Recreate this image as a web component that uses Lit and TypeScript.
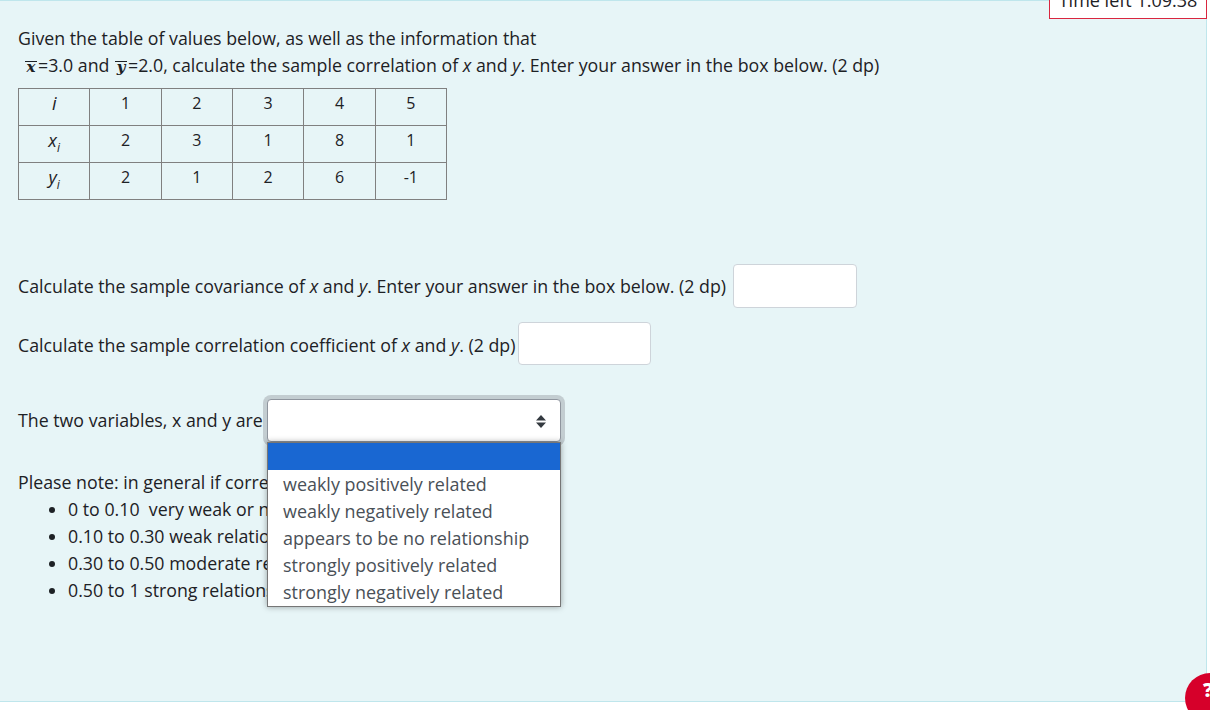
import { LitElement, html, css } from "lit";
import { customElement } from "lit/decorators.js";

const rows = [
  ["i", "1", "2", "3", "4", "5"],
  ["x", "2", "3", "1", "8", "1"],
  ["y", "2", "1", "2", "6", "-1"],
];
const options = [
  "weakly positively related",
  "weakly negatively related",
  "appears to be no relationship",
  "strongly positively related",
  "strongly negatively related",
];
const notes = [
  "0 to 0.10\u00a0 very weak or no relationship",
  "0.10 to 0.30 weak relationship",
  "0.30 to 0.50 moderate relationship",
  "0.50 to 1 strong relationship",
];

@customElement("app-root")
export class AppRoot extends LitElement {
  static styles = css`
    :host {
      display: block;
      height: 710px;
      background: #fff;
      font-family: "Open Sans", "Noto Sans", sans-serif;
      font-size: 17.77px;
      line-height: 27px;
      color: #1d2125;
      overflow: hidden;
      position: relative;
    }
    .panel {
      box-sizing: border-box;
      width: 1207px;
      height: 702px;
      background: #e7f5f7;
      border: 1px solid #bfe6ec;
      border-left: 0;
      padding: 24px 0 0 18px;
    }
    p { margin: 0; }
    .indent { padding-left: 6px; }
    .m {
      display: inline-block;
      font-family: "DejaVu Serif", serif;
      font-style: italic;
      font-weight: 700;
      font-size: 15px;
      line-height: 11px;
      width: 12px;
      text-align: center;
      border-top: 1px solid #1d2125;
      margin: 0 1px;
    }
    table {
      border-collapse: collapse;
      table-layout: fixed;
      width: 429px;
      margin-top: 9px;
      font-size: 16px;
    }
    td {
      border: 1px solid #808080;
      height: 37px;
      padding: 0 0 8px;
      box-sizing: border-box;
      text-align: center;
      line-height: 24px;
    }
    td.v { font-style: italic; font-size: 18px; }
    sub { font-size: 12px; line-height: 0; }
    .row { display: flex; align-items: center; }
    .q1 { margin-top: 64px; }
    .q2 { margin-top: 14px; }
    .q2 span { padding-top: 3px; }
    .q3 { margin-top: 34px; position: relative; }
    .box {
      box-sizing: border-box;
      height: 44px;
      background: #fff;
      border: 1px solid #ced4da;
      border-radius: 4px;
      padding: 0;
      display: block;
    }
    .b1 { width: 124px; margin-left: 7px; }
    .b2 { width: 133px; height: 43px; margin-left: 3px; }
    .selwrap {
      position: relative;
      margin-left: 4px;
      width: 294px;
      height: 43px;
      box-sizing: border-box;
      background: #fff;
      border: 1px solid #8f959e;
      border-radius: 4px;
      box-shadow: 0 0 0 4px #c3cdd1;
    }
    select {
      appearance: none;
      border: 0;
      background: transparent;
      width: 100%;
      height: 100%;
      display: block;
      padding: 0;
      outline: none;
    }
    .arrow {
      position: absolute;
      right: 14px;
      top: 15px;
      width: 10px;
      height: 13px;
      pointer-events: none;
    }
    .menu {
      position: absolute;
      left: 249px;
      top: 43px;
      box-sizing: border-box;
      width: 294px;
      background: #fff;
      border: 1px solid #767676;
      box-shadow: 0 0 6px rgba(0, 0, 0, 0.35);
      color: #495057;
      font-size: 17.95px;
      z-index: 2;
    }
    .opt { height: 27px; padding-left: 15px; white-space: nowrap; }
    .opt.sel { background: #1967d2; }
    .opt.first { margin-top: 0; }
    .list { padding-top: 1px; }
    .notes { width: 249px; overflow: hidden; white-space: nowrap; margin-top: 27px; }
    ul { margin: 0; padding: 0 0 0 50px; }
    li { white-space: nowrap; }
    .timer {
      position: absolute;
      right: 3px;
      top: -8px;
      box-sizing: border-box;
      width: 158px;
      height: 27px;
      background: #fff;
      border: 1px solid #d9263f;
      text-align: center;
      font-size: 18px;
      line-height: 14px;
    }
    .help {
      position: absolute;
      left: 1185px;
      top: 673px;
      width: 50px;
      height: 50px;
      border-radius: 50%;
      background: #d6002a;
      color: #fff;
      font: 800 20px/34px "Open Sans", sans-serif;
      padding-left: 18px;
      box-sizing: border-box;
    }
  `;

  render() {
    return html`
      <div class="panel">
        <p>Given the table of values below, as well as the information that</p>
        <p class="indent"><span class="m">x</span>=3.0 and <span class="m">y</span>=2.0, calculate the sample correlation of <i>x</i> and <i>y</i>. Enter your answer in the box below. (2 dp)</p>
        <table>
          ${rows.map(
            (r) => html`<tr>
              ${r.map((c, i) =>
                i === 0
                  ? html`<td class="v">${c}${c !== "i" ? html`<sub>i</sub>` : ""}</td>`
                  : html`<td>${c}</td>`
              )}
            </tr>`
          )}
        </table>
        <div class="row q1">
          <span>Calculate the sample covariance of <i>x</i> and <i>y</i>. Enter your answer in the box below. (2 dp)</span>
          <input class="box b1" aria-label="covariance" />
        </div>
        <div class="row q2">
          <span>Calculate the sample correlation coefficient of <i>x</i> and <i>y</i>. (2 dp)</span>
          <input class="box b2" aria-label="correlation" />
        </div>
        <div class="row q3">
          <span>The two variables, x and y are</span>
          <div class="selwrap">
            <select aria-label="relationship"><option></option></select>
            <svg class="arrow" viewBox="0 0 10 13"><path d="M5 0 10 5.5H0ZM5 13 0 7.5H10Z" fill="#343a40"/></svg>
          </div>
          <div class="menu">
            <div class="opt sel"></div>
            <div class="list">${options.map((o) => html`<div class="opt">${o}</div>`)}</div>
          </div>
        </div>
        <div class="notes">
          <p>Please note: in general if correlation is</p>
          <ul>${notes.map((n) => html`<li>${n}</li>`)}</ul>
        </div>
      </div>
      <div class="timer">Time left 1:09:38</div>
      <div class="help">?</div>
    `;
  }
}
